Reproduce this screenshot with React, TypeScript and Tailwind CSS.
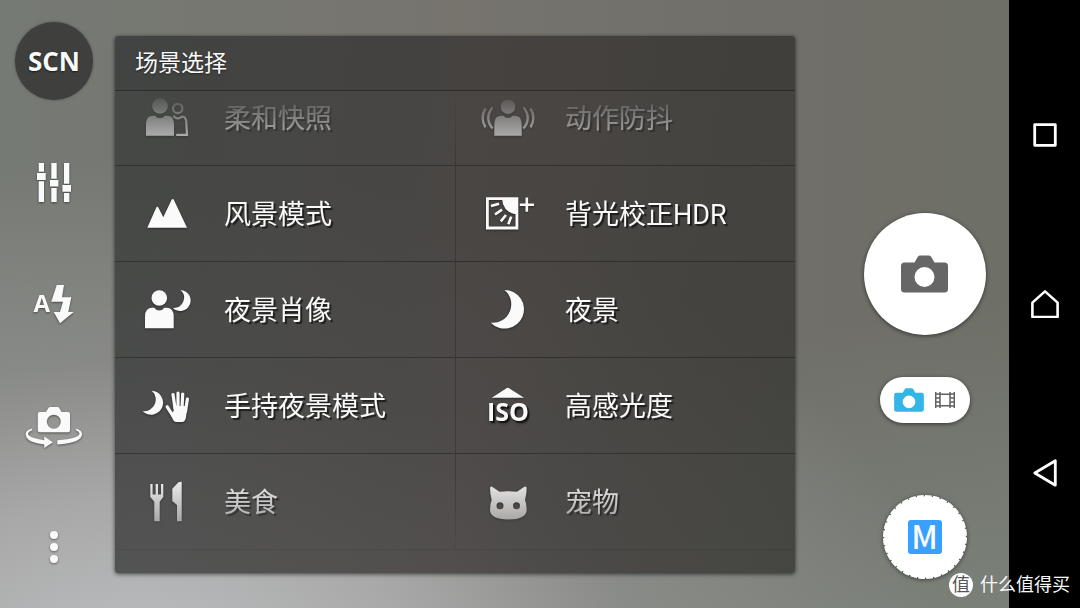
import type { ReactNode } from "react";

const CAMERA =
  "M3.5 7.5H13.5L17 1.5Q17.8 0.5 19 0.5H28Q29.2 0.5 30 1.5L33.5 7.5H43.5Q47 7.5 47 11V34Q47 37.5 43.5 37.5H3.5Q0 37.5 0 34V11Q0 7.5 3.5 7.5ZM23.5 12A10 10 0 1 0 23.5 32A10 10 0 1 0 23.5 12Z";

function Camera({ className }: { className: string }) {
  return (
    <svg viewBox="0 0 47 38" className={className} fill="currentColor" fillRule="evenodd" aria-hidden="true">
      <path d={CAMERA} />
    </svg>
  );
}

function Glyph({ children }: { children: ReactNode }) {
  return (
    <svg
      viewBox="0 0 64 48"
      className="h-12 w-16 shrink-0 drop-shadow-[0_1px_1px_rgba(0,0,0,0.45)]"
      fill="currentColor"
      aria-hidden="true"
    >
      {children}
    </svg>
  );
}

const SoftSnap = (
  <Glyph>
    <circle cx="25" cy="12" r="7.8" />
    <path d="M11 41.7V30Q11 21.7 18 21.7H20Q22 24.2 25 24.2T30 21.7H32Q39 21.7 39 30V41.7Z" />
    <circle cx="42.7" cy="14.5" r="4.7" fill="none" stroke="currentColor" strokeWidth="2.2" />
    <path d="M38.5 21.5Q40 24.5 43 24.3Q45 24.2 47 22.6Q50.5 22.6 51.2 27L52 40.8H41.2" fill="none" stroke="currentColor" strokeWidth="2.2" />
  </Glyph>
);

const AntiShake = (
  <Glyph>
    <circle cx="32" cy="12.7" r="7.3" />
    <path d="M18.3 41.7V30Q18.3 21.7 25.5 21.7H27.5Q29 24 32 24T36.5 21.7H38.5Q45.7 21.7 45.7 30V41.7Z" />
    <g fill="none" stroke="currentColor" strokeWidth="2.4">
      <path d="M9.5 14.3Q3.7 23.8 9.5 33.3M16.5 13.3Q8 24 16.5 34.5" />
      <path d="M54.5 14.3Q60.3 23.8 54.5 33.3M47.5 13.3Q56 24 47.5 34.5" />
    </g>
  </Glyph>
);

const Landscape = (
  <Glyph>
    <path d="M12.3 37.7L21.3 17.5Q22.3 15.8 23.3 17.5L28.3 27.3L36.6 9.8Q37.7 8 38.8 9.8L52 37.7Z" />
  </Glyph>
);

const BacklightHdr = (
  <Glyph>
    <path d="M11.4 8.7H40.9V38H11.4Z" fill="none" stroke="currentColor" strokeWidth="2.8" />
    <path d="M26 8.5H42V24.5Q27 23.5 26 8.5Z" />
    <path d="M15 16L23 13.8M19 24.5L26 19.6M24.8 31.3L30 25M32.3 34.3L35.2 26.6" fill="none" stroke="currentColor" strokeWidth="2.6" />
    <path d="M50.8 7.6V21.8M43.8 14.7H58" fill="none" stroke="currentColor" strokeWidth="2.6" />
  </Glyph>
);

const NightPortrait = (
  <Glyph>
    <circle cx="24.3" cy="12" r="7.8" />
    <path d="M10 42.3V30.5Q10 21.7 17.5 21.7H19.3Q21 24.5 24.3 24.5T29.3 21.7H31.2Q38.7 21.7 38.7 30.5V42.3Z" />
    <path d="M45.5 4A10.5 10.5 0 1 1 37.8 22A10.3 10.3 0 0 0 45.5 4Z" />
  </Glyph>
);

const Night = (
  <Glyph>
    <path d="M28.5 4A19.3 19.3 0 1 1 14.8 36.7A18.5 18.5 0 0 0 28.5 4Z" />
  </Glyph>
);

const HandheldNight = (
  <Glyph>
    <path d="M16.7 8.7A12 12 0 1 1 7.7 29.3A11.8 11.8 0 0 0 16.7 8.7Z" />
    <g fill="none" stroke="currentColor" strokeWidth="3.2" strokeLinecap="round">
      <path d="M38 12.5L40 26M43 11V26M47.7 12L47 26M52.4 17L50.4 30M32.2 24.8L38 34" />
    </g>
    <path d="M38.4 24H51.4L51.3 33Q50.6 40 47.5 40H41.5Q39 40 37.9 37.5L35.5 32L38.7 29Z" />
  </Glyph>
);

const HighIso = (
  <Glyph>
    <path d="M15.7 15.7L30.9 6Q31.8 5.5 32.7 6L48 15.7Z" />
    <text x="32" y="39" textAnchor="middle" className="font-['Open_Sans',sans-serif] text-[25px] font-bold">
      ISO
    </text>
  </Glyph>
);

const Food = (
  <Glyph>
    <path d="M15.3 6H17.6V16.5H20.6V6H23V16.5H26V6H28.3V19L24.7 23.7V43.3H19.3V23.7L15.3 19Z" />
    <path d="M46.7 3.7V43.3H42V27L37.3 23V10.8L43.5 4.2Q44.5 3.7 46.7 3.7Z" />
  </Glyph>
);

const Pet = (
  <Glyph>
    <path
      fillRule="evenodd"
      d="M14.2 9.5Q14.8 8 16.5 9L23.5 13.8Q32.3 12.6 41 13.8L48 9Q50 8 50.5 9.5Q51 14 49 22Q50.7 26 50.7 31.5Q50.7 41.5 32.3 41.5T14 31.5Q14 26 15.7 22Q13.7 14 14.2 9.5ZM24 24.2A3.5 3.5 0 1 0 24 31.2A3.5 3.5 0 1 0 24 24.2ZM40.5 24.2A3.5 3.5 0 1 0 40.5 31.2A3.5 3.5 0 1 0 40.5 24.2Z"
    />
  </Glyph>
);

const scenes: { name: string; icon: ReactNode }[] = [
  { name: "柔和快照", icon: SoftSnap },
  { name: "动作防抖", icon: AntiShake },
  { name: "风景模式", icon: Landscape },
  { name: "背光校正HDR", icon: BacklightHdr },
  { name: "夜景肖像", icon: NightPortrait },
  { name: "夜景", icon: Night },
  { name: "手持夜景模式", icon: HandheldNight },
  { name: "高感光度", icon: HighIso },
  { name: "美食", icon: Food },
  { name: "宠物", icon: Pet },
];

function Toolbar() {
  return (
    <aside className="grid w-[108px] shrink-0 grid-rows-5 place-items-center">
      <button
        type="button"
        className="size-[78px] rounded-full bg-[#3f3f3e] pt-0.5 font-['Open_Sans',sans-serif] text-[26px] font-bold shadow-[0_0_3px_rgba(0,0,0,0.35)] [text-shadow:0_1px_2px_rgba(0,0,0,0.6)]"
      >
        SCN
      </button>
      <button type="button" aria-label="调整">
        <Glyph>
          <path d="M16.7 5H22V13.7H16.7ZM15 15H23.7V22H15ZM16.7 23.3H22V44H16.7Z" />
          <path d="M29.3 5H34.7V20.7H29.3ZM28 22H36.4V28.6H28ZM29.3 30H34.7V44H29.3Z" />
          <path d="M42 5H47.3V25.7H42ZM40.4 27H49V33.7H40.4ZM42 35H47.3V44H42Z" />
        </Glyph>
      </button>
      <button type="button" aria-label="自动闪光灯">
        <Glyph>
          <text x="11.5" y="31.7" className="font-['Open_Sans',sans-serif] text-[24px] font-bold">
            A
          </text>
          <path d="M34.7 5H42L40 17.3H49.3L46.3 32H51.7L38 43.3L31.7 32H38L41 21.7H29.3Z" />
        </Glyph>
      </button>
      <button type="button" aria-label="切换摄像头">
        <Glyph>
          <path
            fillRule="evenodd"
            d="M18 10H24L26.4 6Q27 5 28.2 5H35.4Q36.6 5 37.2 6L39.6 10H46Q48 10 48 12V28.3Q48 30.3 46 30.3H18Q15.8 30.3 15.8 28.3V12Q15.8 10 18 10ZM31.8 12.7A7 7 0 1 0 31.8 26.7A7 7 0 1 0 31.8 12.7Z"
          />
          <path d="M10.3 26.6Q3.7 28.2 3.7 32.3Q4 40.5 22.3 42.4V46L30.8 40.3L22.3 34.6V38.2Q5.5 35.5 6 31.5Q6.3 29.5 9.6 28.6Z" />
          <path d="M53.7 26.6Q60 28.2 60 32.3Q59.5 41 35.3 42.4V38.3Q57.5 36.5 57.5 31.5Q57.3 29.5 54.4 28.6Z" />
        </Glyph>
      </button>
      <button type="button" aria-label="更多">
        <Glyph>
          <circle cx="32" cy="12" r="4" />
          <circle cx="32" cy="24" r="4" />
          <circle cx="32" cy="36" r="4" />
        </Glyph>
      </button>
    </aside>
  );
}

function ScenePanel() {
  return (
    <section className="flex h-full flex-col overflow-hidden rounded-[3px] bg-[linear-gradient(100deg,#393c3bcc_0%,#3e3a39cc_55%,#373733cc_100%)] shadow-[0_1px_4px_rgba(0,0,0,0.65)]">
      <h1 className="flex h-[55px] shrink-0 items-center border-b border-black/35 bg-black/5 pt-0.5 pl-5 text-[23px] [text-shadow:0_1px_2px_rgba(0,0,0,0.5)]">
        场景选择
      </h1>
      <div className="min-h-0 flex-1 overflow-hidden [mask-image:linear-gradient(to_bottom,transparent_0,black_80px,black_calc(100%-100px),transparent_100%)]">
        <ul className="-mt-[21px] grid grid-cols-2">
          {scenes.map((scene) => (
            <li key={scene.name} className="h-24 border-b border-black/30 even:border-l even:border-l-black/20">
              <button
                type="button"
                className="flex size-full items-center gap-[25px] pl-5 text-left text-[27px] [text-shadow:2px_2px_1px_rgba(0,0,0,0.6)]"
              >
                {scene.icon}
                <span className="pt-1">{scene.name}</span>
              </button>
            </li>
          ))}
        </ul>
      </div>
    </section>
  );
}

function CaptureControls() {
  return (
    <div className="flex w-[169px] shrink-0 flex-col items-center justify-end pb-[29px]">
      <button
        type="button"
        aria-label="拍照"
        className="flex size-[122px] items-center justify-center rounded-full bg-white text-[#666] shadow-[0_1px_4px_rgba(0,0,0,0.55)]"
      >
        <Camera className="h-[38px] w-[47px]" />
      </button>
      <button
        type="button"
        aria-label="照片或视频"
        className="mt-[42px] flex h-[46px] w-[90px] items-center justify-center gap-[11px] rounded-full bg-white shadow-[0_1px_4px_rgba(0,0,0,0.55)]"
      >
        <Camera className="h-6 w-[30px] text-[#33b5e5]" />
        <svg viewBox="0 0 20 16" className="h-4 w-5 text-[#606060]" fill="none" stroke="currentColor" aria-hidden="true">
          <path d="M.7 0V16M5 0V16M15 0V16M19.3 0V16M5 2.3H15M5 13.7H15" strokeWidth="1.5" />
          <path d="M.5 2H5M.5 6H5M.5 10H5M.5 14H5M15 2H19.5M15 6H19.5M15 10H19.5M15 14H19.5" strokeWidth="1.3" />
        </svg>
      </button>
      <button type="button" className="mt-[72px] grid size-[84px] place-items-center">
        <svg viewBox="0 0 84 84" className="col-start-1 row-start-1 size-[84px] drop-shadow-[0_1px_2px_rgba(0,0,0,0.5)]" fill="white" aria-hidden="true">
          <circle cx="42" cy="42" r="40.8" />
          <circle cx="42" cy="42" r="41" fill="none" stroke="white" strokeWidth="2" pathLength="320" strokeDasharray="8.4 1.6" />
        </svg>
        <span className="relative col-start-1 row-start-1 flex size-[34px] items-center justify-center rounded-[3px] bg-[#39a0ff] pb-1 font-['Noto_Sans_CJK_SC',sans-serif] text-[32px] leading-none font-medium">
          M
        </span>
      </button>
    </div>
  );
}

function SystemNav() {
  return (
    <nav className="flex w-[71px] shrink-0 flex-col items-center justify-between bg-black py-[121px]">
      <button type="button" aria-label="最近任务">
        <svg viewBox="0 0 28 28" className="size-7" fill="none" stroke="white" strokeWidth="2.8" strokeLinejoin="round" aria-hidden="true">
          <path d="M3.7 3.7H24.3V24.3H3.7Z" />
        </svg>
      </button>
      <button type="button" aria-label="主屏幕">
        <svg viewBox="0 0 28 28" className="size-7" fill="none" stroke="white" strokeWidth="2.6" strokeLinejoin="round" aria-hidden="true">
          <path d="M14 1.4L26.6 12.6V27H1.4V12.6Z" />
        </svg>
      </button>
      <button type="button" aria-label="返回">
        <svg viewBox="0 0 28 28" className="size-7" fill="none" stroke="white" strokeWidth="2.8" strokeLinejoin="round" aria-hidden="true">
          <path d="M24.3 1.8V26.2L3.8 14Z" />
        </svg>
      </button>
    </nav>
  );
}

export default function App() {
  return (
    <div className="relative flex h-screen overflow-hidden bg-[#75756f] font-['Roboto','Noto_Sans_CJK_SC',sans-serif] text-[#fafafa]">
      <div className="flex min-w-0 flex-1 bg-[radial-gradient(ellipse_80%_85%_at_14%_112%,#c0c2c4_0%,#a8a8a8_35%,#8f908ebb_62%,#75756f00_100%),linear-gradient(170deg,#75756f00_60%,#7f877fbb_100%),linear-gradient(90deg,#767a74_0%,#77746e_45%,#706f69_75%,#6e6f67_100%)]">
        <Toolbar />
        <main className="min-w-0 flex-1 pt-9 pr-[45px] pb-[35px] pl-[7px]">
          <ScenePanel />
        </main>
        <CaptureControls />
      </div>
      <SystemNav />
      <div className="absolute right-[10px] bottom-[11px] flex items-center gap-[7px] text-[18px] leading-6">
        <span className="flex size-6 items-center justify-center rounded-full bg-white text-[18px] text-[#555]" aria-hidden="true">
          值
        </span>
        <span>什么值得买</span>
      </div>
    </div>
  );
}
